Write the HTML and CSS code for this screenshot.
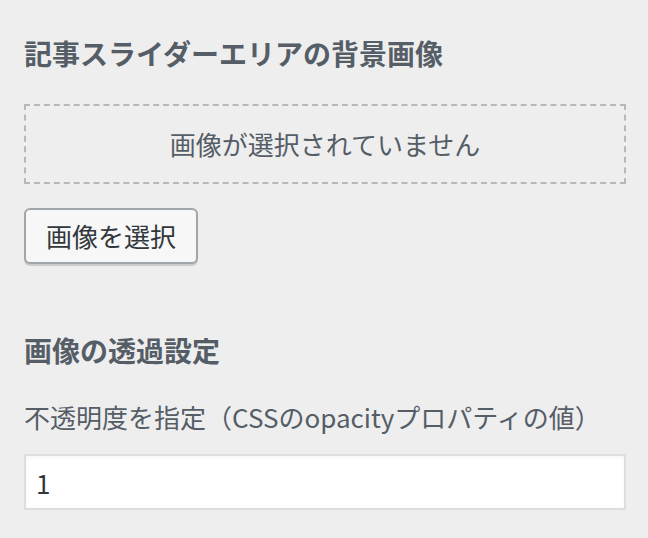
FILE: index.html
```html
<!DOCTYPE html>
<html lang="ja">
<head>
    <meta charset="UTF-8" />
    <meta name="viewport" content="width=device-width, initial-scale=1" />
    <title>カスタマイズ - 背景画像</title>
    <link rel="stylesheet" href="styles.css">
</head>
<body>
    <div class="panel">
        <div class="control">
            <h3 class="control-title">記事スライダーエリアの背景画像</h3>
            <div class="placeholder">画像が選択されていません</div>
            <button class="button" type="button">画像を選択</button>
        </div>

        <div class="control control-opacity">
            <h3 class="control-title">画像の透過設定</h3>
            <label class="description" for="opacity">不透明度を指定（CSSのopacityプロパティの値）</label>
            <input type="text" id="opacity" value="1" />
        </div>
    </div>
</body>
</html>
```

FILE: styles.css
```css
html,
body {
    margin: 0;
    background-color: #eeeeee;
}

body {
    font-family: "Noto Sans CJK JP", "Noto Sans", sans-serif;
    color: #555d66;
}

.panel {
    padding: 33px 22px 0 24px;
}

.control-title {
    margin: 0 0 31px;
    font-size: 28px;
    line-height: 40px;
    font-weight: 700;
    color: #555d66;
}

.placeholder {
    height: 80px;
    box-sizing: border-box;
    border: 2px dashed #b4b9be;
    font-size: 26px;
    line-height: 76px;
    text-align: center;
    color: #555d66;
}

.button {
    display: block;
    margin-top: 24px;
    height: 56px;
    padding: 0 20px;
    font-family: inherit;
    font-size: 26px;
    line-height: 52px;
    color: #32373c;
    background-color: #f7f7f7;
    border: 2px solid #a0a5aa;
    border-radius: 6px;
    box-shadow: 0 2px 0 #cccccc;
    cursor: pointer;
}

.control-opacity {
    margin-top: 66px;
}

.control-opacity .control-title {
    margin-bottom: 27px;
}

.description {
    display: block;
    font-size: 26px;
    line-height: 40px;
    color: #555d66;
}

input[type="text"] {
    display: block;
    width: 100%;
    height: 56px;
    margin-top: 17px;
    box-sizing: border-box;
    padding: 0 10px;
    font-family: inherit;
    font-size: 26px;
    color: #32373c;
    background-color: #ffffff;
    border: 2px solid #dddddd;
    box-shadow: inset 0 2px 4px rgba(0, 0, 0, 0.04);
    outline: none;
}
```
